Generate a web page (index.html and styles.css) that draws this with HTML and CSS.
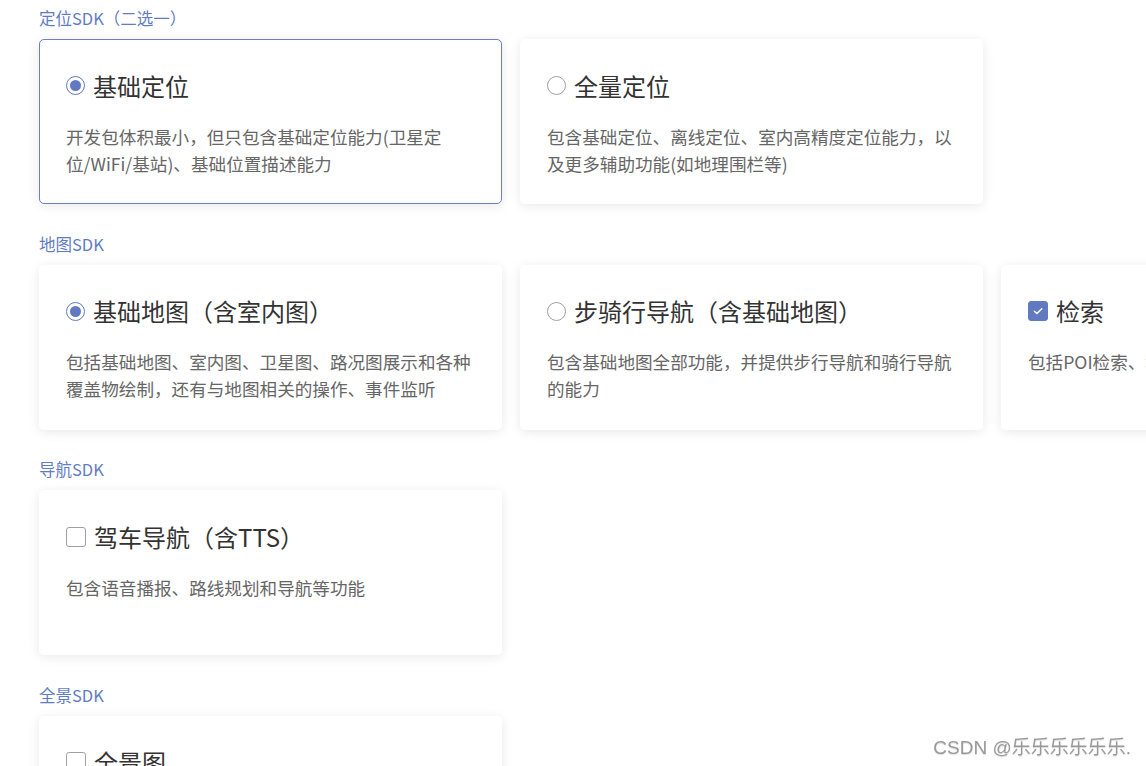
FILE: index.html
```html
<!DOCTYPE html>
<html lang="zh-CN">
<head>
<meta charset="utf-8">
<title>SDK选择</title>
<link rel="stylesheet" href="styles.css">
</head>
<body>
<div class="page">
  <section class="group">
    <div class="group-label">定位SDK（二选一）</div>
    <div class="cards">
      <div class="card selected">
        <div class="card-title"><span class="radio checked"></span><span>基础定位</span></div>
        <div class="card-desc">开发包体积最小，但只包含基础定位能力(卫星定位/WiFi/基站)、基础位置描述能力</div>
      </div>
      <div class="card">
        <div class="card-title"><span class="radio"></span><span>全量定位</span></div>
        <div class="card-desc">包含基础定位、离线定位、室内高精度定位能力，以及更多辅助功能(如地理围栏等)</div>
      </div>
    </div>
  </section>

  <section class="group">
    <div class="group-label">地图SDK</div>
    <div class="cards">
      <div class="card">
        <div class="card-title"><span class="radio checked"></span><span>基础地图（含室内图）</span></div>
        <div class="card-desc">包括基础地图、室内图、卫星图、路况图展示和各种覆盖物绘制，还有与地图相关的操作、事件监听</div>
      </div>
      <div class="card">
        <div class="card-title"><span class="radio"></span><span>步骑行导航（含基础地图）</span></div>
        <div class="card-desc">包含基础地图全部功能，并提供步行导航和骑行导航的能力</div>
      </div>
      <div class="card">
        <div class="card-title"><span class="check checked"><svg viewBox="0 0 20 20" width="20" height="20"><path d="M6 10.2l2.8 2.6L14.2 7.4" fill="none" stroke="#fff" stroke-width="1.6" stroke-linecap="round" stroke-linejoin="round"/></svg></span><span>检索</span></div>
        <div class="card-desc">包括POI检索、地点输入提示、地理编码等</div>
      </div>
    </div>
  </section>

  <section class="group">
    <div class="group-label">导航SDK</div>
    <div class="cards">
      <div class="card">
        <div class="card-title"><span class="check"></span><span>驾车导航（含TTS）</span></div>
        <div class="card-desc">包含语音播报、路线规划和导航等功能</div>
      </div>
    </div>
  </section>

  <section class="group">
    <div class="group-label">全景SDK</div>
    <div class="cards">
      <div class="card">
        <div class="card-title"><span class="check"></span><span>全景图</span></div>
        <div class="card-desc">包含全景图展示和相关交互功能</div>
      </div>
    </div>
  </section>
</div>
<div class="watermark">CSDN @乐乐乐乐乐乐.</div>
</body>
</html>
```

FILE: styles.css
```css
html, body {
  margin: 0;
  padding: 0;
  overflow: hidden;
  background: #ffffff;
}

body {
  font-family: "Noto Sans CJK SC", "Noto Sans", sans-serif;
  color: #333333;
}

.page {
  padding: 7px 0 0 39px;
}

.group {
  margin-bottom: 28.5px;
}

.group-label {
  font-size: 16.5px;
  line-height: 22px;
  color: #5f7cc4;
  margin-bottom: 10px;
}

.cards {
  display: flex;
  gap: 18.5px;
}

.card {
  flex: 0 0 auto;
  width: 462.5px;
  height: 165px;
  box-sizing: border-box;
  padding: 28.5px 20px 0 26px;
  background: #ffffff;
  border: 1px solid transparent;
  border-radius: 5px;
  box-shadow: 0 2px 12px 0 rgba(0, 0, 0, 0.09);
}

.card.selected {
  border-color: #6a80c3;
}

.card-title {
  display: flex;
  align-items: center;
  gap: 8px;
  font-size: 24px;
  line-height: 34px;
  height: 34px;
  color: #333333;
}

.radio {
  flex: 0 0 auto;
  width: 19px;
  height: 19px;
  box-sizing: border-box;
  border: 1px solid #a0a0a0;
  border-radius: 50%;
  background: #ffffff;
  position: relative;
}

.radio.checked {
  border-color: #6179c0;
}

.radio.checked::after {
  content: "";
  position: absolute;
  left: 3px;
  top: 3px;
  width: 11px;
  height: 11px;
  border-radius: 50%;
  background: #6179c0;
}

.check {
  flex: 0 0 auto;
  width: 20px;
  height: 20px;
  box-sizing: border-box;
  border: 1px solid #a0a0a0;
  border-radius: 3px;
  background: #ffffff;
  display: flex;
  align-items: center;
  justify-content: center;
}

.check.checked {
  background: #6179c0;
  border-color: #6179c0;
}

.check svg {
  display: block;
}

.card-desc {
  margin-top: 20px;
  font-size: 17.6px;
  line-height: 27px;
  color: #666666;
}

.watermark {
  position: fixed;
  right: 15px;
  bottom: 7px;
  font-family: "Liberation Sans", "Noto Sans CJK SC", sans-serif;
  font-size: 19px;
  color: #9a9a9a;
  text-shadow: 0 1px 1px rgba(0, 0, 0, 0.15);
}
```
